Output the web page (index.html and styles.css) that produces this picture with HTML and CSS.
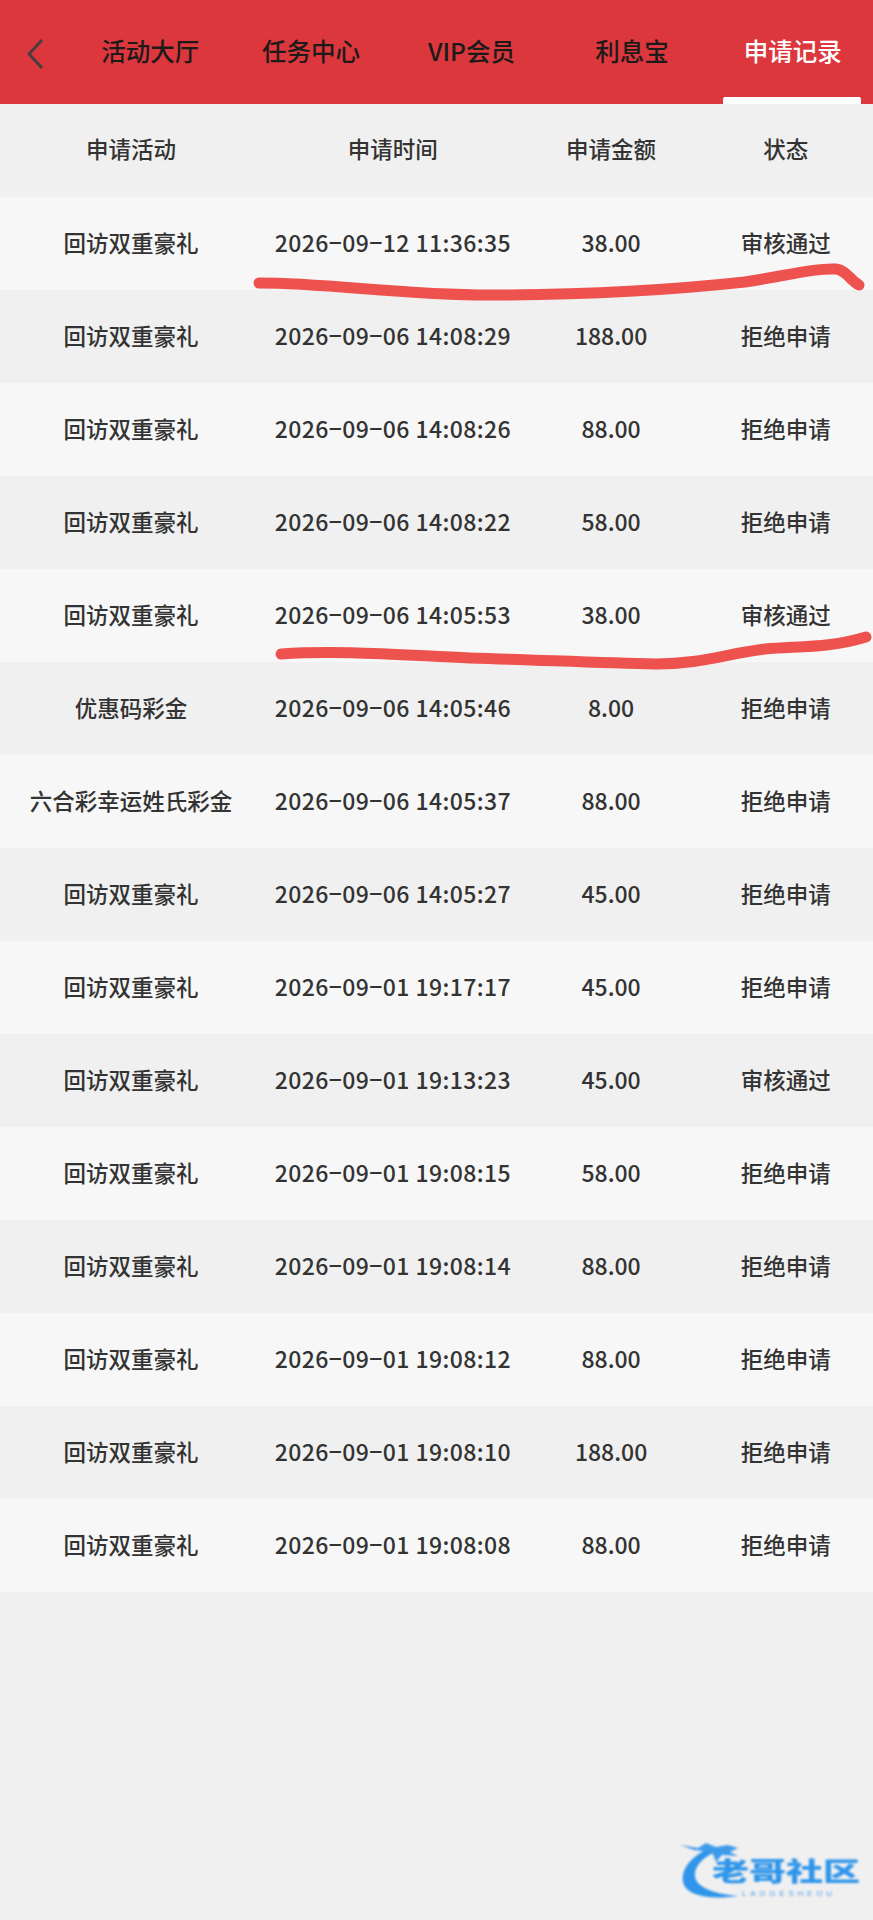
FILE: index.html
```html
<!DOCTYPE html>
<html lang="zh-CN">
<head>
    <meta charset="UTF-8">
    <meta name="viewport" content="width=device-width, initial-scale=1.0">
    <title>申请记录</title>
    <link rel="stylesheet" href="styles.css">
</head>
<body>

    <!-- Top tabs -->
    <nav class="topbar">
        <a class="back" href="#" aria-label="返回">
            <svg width="16" height="30" viewBox="0 0 16 30"><path d="M15 1 L2 15 L15 29" fill="none" stroke="#4b3d3f" stroke-width="3"/></svg>
        </a>
        <a class="tab" href="#">活动大厅</a>
        <a class="tab" href="#">任务中心</a>
        <a class="tab" href="#">VIP会员</a>
        <a class="tab" href="#">利息宝</a>
        <a class="tab active" href="#">申请记录</a>
    </nav>

    <div class="row head">
        <span>申请活动</span><span>申请时间</span><span>申请金额</span><span>状态</span>
    </div>

    <div class="row"><span>回访双重豪礼</span><span class="date">2026−09−12 11:36:35</span><span class="num">38.00</span><span>审核通过</span></div>
    <div class="row"><span>回访双重豪礼</span><span class="date">2026−09−06 14:08:29</span><span class="num">188.00</span><span>拒绝申请</span></div>
    <div class="row"><span>回访双重豪礼</span><span class="date">2026−09−06 14:08:26</span><span class="num">88.00</span><span>拒绝申请</span></div>
    <div class="row"><span>回访双重豪礼</span><span class="date">2026−09−06 14:08:22</span><span class="num">58.00</span><span>拒绝申请</span></div>
    <div class="row"><span>回访双重豪礼</span><span class="date">2026−09−06 14:05:53</span><span class="num">38.00</span><span>审核通过</span></div>
    <div class="row"><span>优惠码彩金</span><span class="date">2026−09−06 14:05:46</span><span class="num">8.00</span><span>拒绝申请</span></div>
    <div class="row"><span>六合彩幸运姓氏彩金</span><span class="date">2026−09−06 14:05:37</span><span class="num">88.00</span><span>拒绝申请</span></div>
    <div class="row"><span>回访双重豪礼</span><span class="date">2026−09−06 14:05:27</span><span class="num">45.00</span><span>拒绝申请</span></div>
    <div class="row"><span>回访双重豪礼</span><span class="date">2026−09−01 19:17:17</span><span class="num">45.00</span><span>拒绝申请</span></div>
    <div class="row"><span>回访双重豪礼</span><span class="date">2026−09−01 19:13:23</span><span class="num">45.00</span><span>审核通过</span></div>
    <div class="row"><span>回访双重豪礼</span><span class="date">2026−09−01 19:08:15</span><span class="num">58.00</span><span>拒绝申请</span></div>
    <div class="row"><span>回访双重豪礼</span><span class="date">2026−09−01 19:08:14</span><span class="num">88.00</span><span>拒绝申请</span></div>
    <div class="row"><span>回访双重豪礼</span><span class="date">2026−09−01 19:08:12</span><span class="num">88.00</span><span>拒绝申请</span></div>
    <div class="row"><span>回访双重豪礼</span><span class="date">2026−09−01 19:08:10</span><span class="num">188.00</span><span>拒绝申请</span></div>
    <div class="row"><span>回访双重豪礼</span><span class="date">2026−09−01 19:08:08</span><span class="num">88.00</span><span>拒绝申请</span></div>

    <!-- Hand drawn marks over the table -->
    <svg class="marks" width="873" height="700" viewBox="0 0 873 700">
        <path d="M259 283 C330 283 400 295 490 295 C600 295 680 289 745 282 C790 275 815 268 836 269 C846 270 850 280 859 285" fill="none" stroke="#ee524f" stroke-width="11" stroke-linecap="round"/>
        <path d="M281 654 C340 650 400 655 470 658 C540 660 600 663 656 664 C700 664 725 654 765 649 C800 646 830 648 866 637" fill="none" stroke="#ee524f" stroke-width="11" stroke-linecap="round"/>
    </svg>

    <!-- Watermark -->
    <svg class="watermark" width="190" height="60" viewBox="0 0 190 60">
        <path d="M32 5 C10 14 1 28 3 40 C6 54 30 58 58 54 C36 52 16 46 15 34 C14 24 24 14 38 9 Z" fill="#2f95ea"/>
        <path d="M0 3 L18 6 L26 1 L36 5 L48 3 L58 6 L50 10 L58 14 L42 13 L36 20 L32 10 L14 8 Z" fill="#3d9bec"/>
        <text class="wm-cn" x="32" y="39" textLength="148" lengthAdjust="spacingAndGlyphs">老哥社区</text>
        <text class="wm-en" x="62" y="54" textLength="90" lengthAdjust="spacing">LAOGESHEOU</text>
    </svg>

</body>
</html>
```

FILE: styles.css
```css
/* Base Styling */
body {
    margin: 0;
    position: relative;
    min-height: 100vh;
    background-color: #f0f0f0;
    color: #333;
    font-family: "Noto Sans CJK SC", "Noto Sans", sans-serif;
    font-size: 22.5px;
    font-weight: 500;
}

/* Top tabs */
.topbar {
    display: flex;
    height: 104px;
    background-color: #dc373d;
}

.back {
    display: flex;
    align-items: center;
    width: 70px;
    padding: 4px 0 0 27px;
    box-sizing: border-box;
}

.tab {
    flex: 1;
    display: flex;
    align-items: center;
    justify-content: center;
    padding-bottom: 3px;
    color: #1d1a1a;
    font-size: 24.5px;
    text-decoration: none;
}

.tab.active {
    position: relative;
    color: #fff;
}

.tab.active::after {
    content: "";
    position: absolute;
    left: 11px;
    right: 12px;
    bottom: 0;
    height: 7px;
    border-radius: 2px 2px 0 0;
    background-color: #fff;
}

/* Table rows */
.row {
    display: grid;
    grid-template-columns: 30% 30% 20% 20%;
    align-items: center;
    box-sizing: border-box;
    height: 93px;
    padding-bottom: 3px;
    text-align: center;
    white-space: nowrap;
}

.row:nth-of-type(even) {
    background-color: #f7f7f7;
}

.head {
    padding-bottom: 5px;
    background-color: #f0f0f0;
}

.num,
.date {
    font-size: 23px;
}

.date {
    letter-spacing: 0.4px;
}

/* Overlays */
.marks {
    position: absolute;
    top: 0;
    left: 0;
    pointer-events: none;
}

.watermark {
    position: absolute;
    top: 1842px;
    left: 680px;
    filter: blur(0.8px);
}

.wm-cn {
    fill: #2f95ea;
    font-size: 26px;
    font-weight: 900;
}

.wm-en {
    fill: #4a9fe8;
    font-family: "Liberation Sans", sans-serif;
    font-size: 8px;
}
```
